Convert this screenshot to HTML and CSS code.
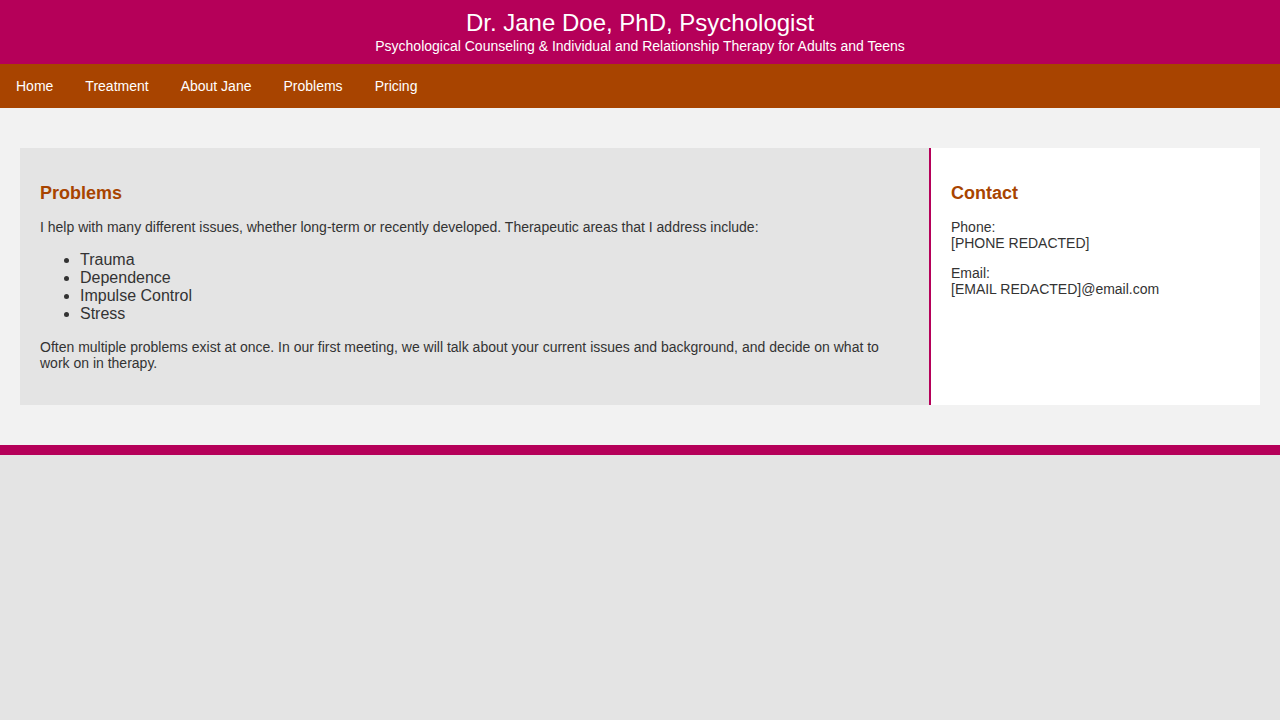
FILE: index.html
```html
<!DOCTYPE html>
<html lang="en">
<head>
<meta charset="utf-8">
<title>Dr. Jane Doe, PhD, Psychologist</title>
<link rel="stylesheet" href="styles.css">
</head>
<body>
<header class="site-header">
  <div class="site-title">Dr. Jane Doe, PhD, Psychologist</div>
  <div class="site-subtitle">Psychological Counseling &amp; Individual and Relationship Therapy for Adults and Teens</div>
</header>
<nav class="site-nav">
  <a class="nav-link" href="#">Home</a>
  <a class="nav-link" href="#">Treatment</a>
  <a class="nav-link" href="#">About Jane</a>
  <a class="nav-link" href="#">Problems</a>
  <a class="nav-link" href="#">Pricing</a>
</nav>
<main class="main">
  <div class="columns">
    <section class="content">
      <h3 class="heading">Problems</h3>
      <p class="text">I help with many different issues, whether long-term or recently developed. Therapeutic areas that I address include:</p>
      <ul class="list">
        <li>Trauma</li>
        <li>Dependence</li>
        <li>Impulse Control</li>
        <li>Stress</li>
      </ul>
      <p class="text">Often multiple problems exist at once. In our first meeting, we will talk about your current issues and background, and decide on what to work on in therapy.</p>
    </section>
    <aside class="sidebar">
      <h3 class="heading">Contact</h3>
      <p class="text">Phone:<br>[PHONE REDACTED]</p>
      <p class="text">Email:<br>[EMAIL REDACTED]@email.com</p>
    </aside>
  </div>
</main>
<footer class="site-footer"></footer>
</body>
</html>
```
FILE: styles.css
```css
html, body {
  margin: 0;
  padding: 0;
}
body {
  background: #e4e4e4;
  font-family: "Liberation Sans", Arial, Helvetica, sans-serif;
  color: #333333;
}
.site-header {
  background: #b50059;
  color: #ffffff;
  text-align: center;
  padding: 10px 0 0;
  height: 54px;
  box-sizing: content-box;
}
.site-title {
  font-size: 24px;
  line-height: 26px;
}
.site-subtitle {
  font-size: 14px;
  line-height: 20px;
}
.site-nav {
  background: #a84400;
  display: flex;
  height: 44px;
  align-items: center;
}
.nav-link {
  color: #ffffff;
  text-decoration: none;
  font-size: 14px;
  line-height: 44px;
  padding: 0 16px;
}
.main {
  background: #f2f2f2;
  padding: 40px 20px;
}
.columns {
  display: grid;
  grid-template-columns: 1fr 329px;
}
.content {
  background: #e4e4e4;
  border-right: 2px solid #b50059;
  padding: 20px;
}
.sidebar {
  background: #ffffff;
  padding: 20px;
}
.heading {
  color: #a84400;
  font-size: 18px;
  line-height: 20px;
  font-weight: bold;
  margin: 15px 0 16px;
}
.text {
  font-size: 14px;
  line-height: 16px;
  margin: 14px 0;
}
.list {
  font-size: 16px;
  line-height: 18px;
  margin: 16px 0;
  padding-left: 40px;
}
.site-footer {
  background: #b50059;
  height: 10px;
}
```
